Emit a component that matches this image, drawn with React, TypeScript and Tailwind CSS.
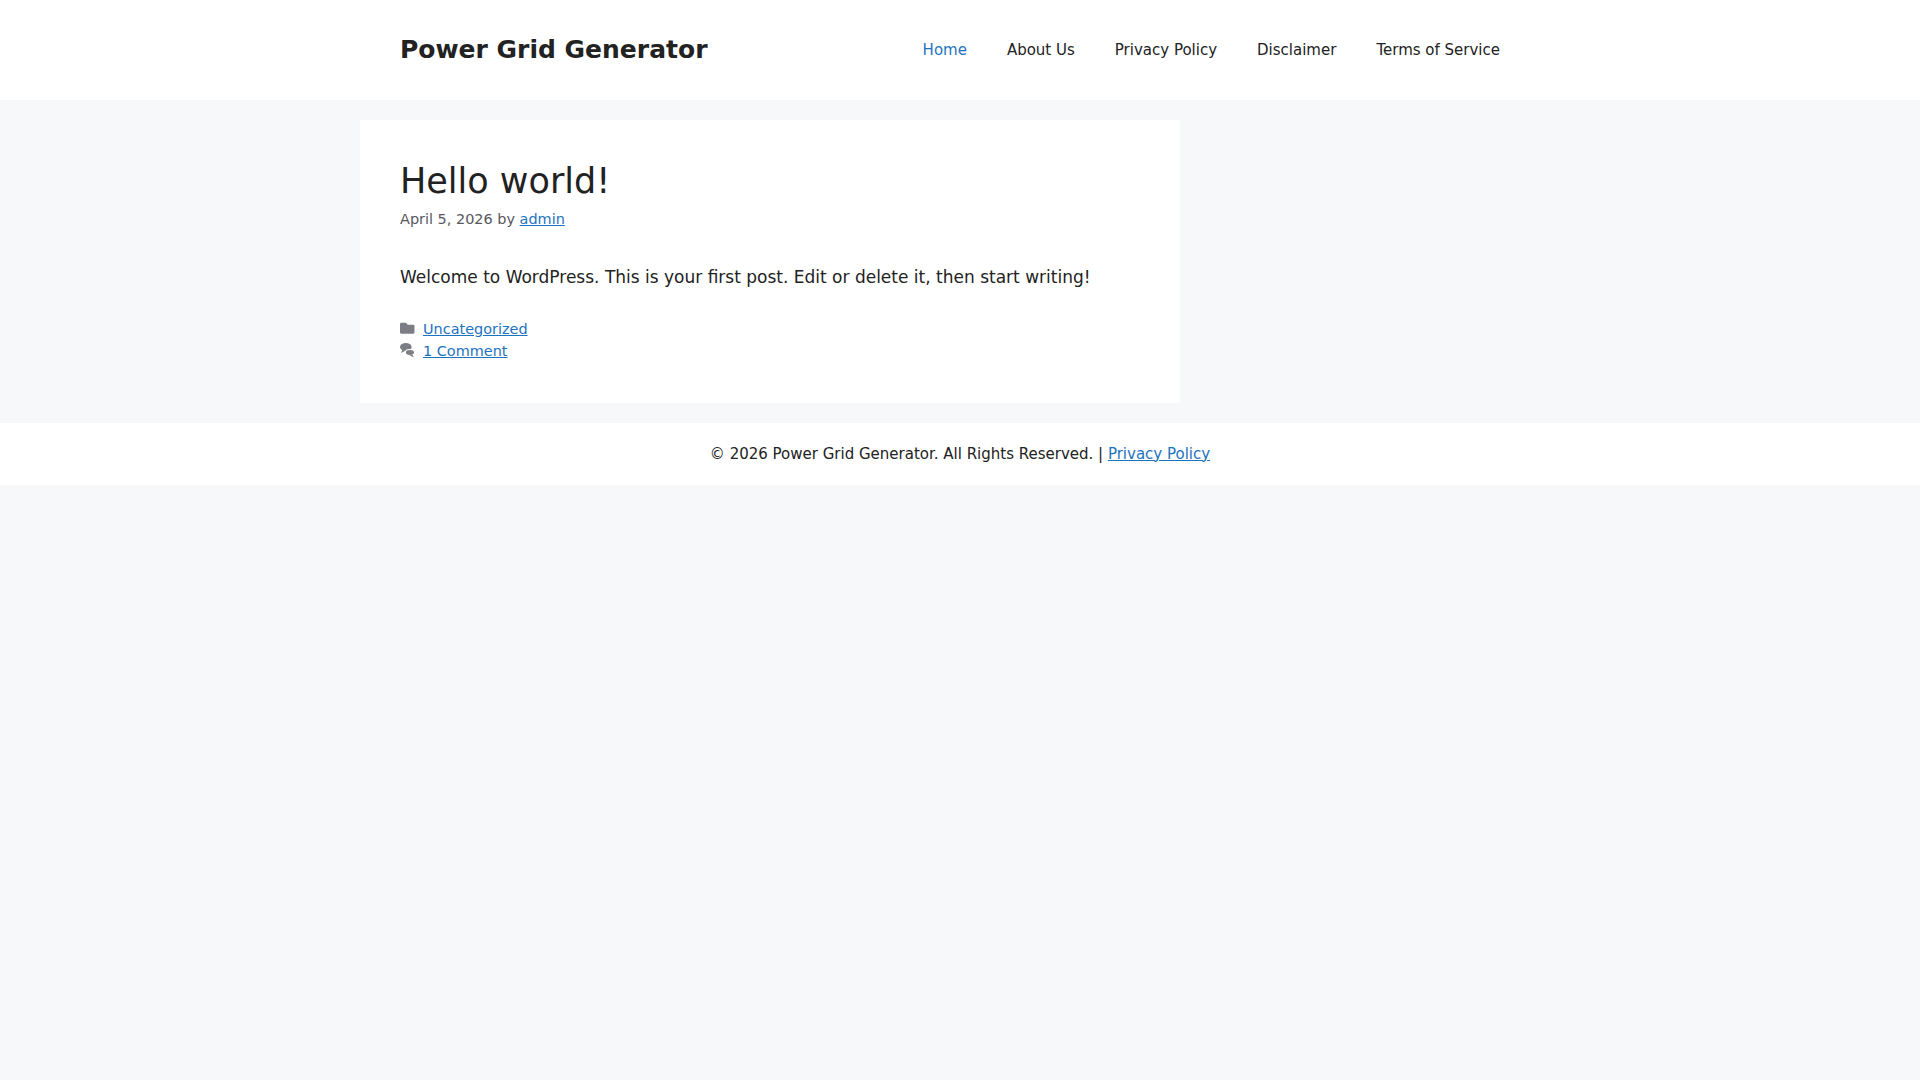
import React from "react";

const navItems = ["Home", "About Us", "Privacy Policy", "Disclaimer", "Terms of Service"];

const FolderIcon = () => (
  <svg viewBox="0 0 512 512" className="w-[14.5px] h-[14.5px] fill-[#7d7d85]">
    <path d="M464 128H272l-64-64H48C21.49 64 0 85.49 0 112v288c0 26.51 21.49 48 48 48h416c26.51 0 48-21.49 48-48V176c0-26.51-21.49-48-48-48z" />
  </svg>
);

const CommentsIcon = () => (
  <svg viewBox="0 0 512 512" className="w-[14.5px] h-[14.5px] fill-[#7d7d85]">
    <ellipse cx="205" cy="140" rx="205" ry="140" />
    <path d="M80 240 L40 350 L190 270 Z" />
    <ellipse cx="350" cy="335" rx="162" ry="105" stroke="#ffffff" strokeWidth="36" />
    <path d="M430 410 L490 500 L340 440 Z" />
  </svg>
);

export default function App() {
  return (
    <div className="min-h-[1080px] bg-[#f7f8f9] text-[#222222] font-['DejaVu_Sans',sans-serif]">
      <header className="bg-white">
        <div className="mx-auto w-[1200px] h-[100px] flex items-center justify-between px-10">
          <span className="text-[25px] font-bold">Power Grid Generator</span>
          <nav className="flex">
            {navItems.map((item, i) => (
              <a key={item} className={`px-5 text-[15px] ${i === 0 ? "text-[#1e73be]" : "text-[#222222]"}`}>
                {item}
              </a>
            ))}
          </nav>
        </div>
      </header>
      <main className="mx-auto w-[1200px] pt-5 pb-5">
        <article className="w-[820px] h-[283px] bg-white p-10">
          <h1 className="text-[35px] leading-[42px]">Hello world!</h1>
          <p className="mt-[7px] text-[14.45px] text-[#575760]">
            April 5, 2026 by <a className="underline text-[#1e73be]">admin</a>
          </p>
          <p className="mt-[33px] text-[17px] leading-[27px]">
            Welcome to WordPress. This is your first post. Edit or delete it, then start writing!
          </p>
          <div className="mt-[27px] text-[14.45px] leading-[22px] text-[#575760]">
            <div className="flex items-center gap-[8.5px]">
              <FolderIcon />
              <a className="underline text-[#1e73be]">Uncategorized</a>
            </div>
            <div className="flex items-center gap-[8.5px]">
              <CommentsIcon />
              <a className="underline text-[#1e73be]">1 Comment</a>
            </div>
          </div>
        </article>
      </main>
      <footer className="bg-white h-[62px] flex items-center justify-center text-[15px]">
        <span>
          © 2026 Power Grid Generator. All Rights Reserved. | <a className="underline text-[#1e73be]">Privacy Policy</a>
        </span>
      </footer>
    </div>
  );
}
